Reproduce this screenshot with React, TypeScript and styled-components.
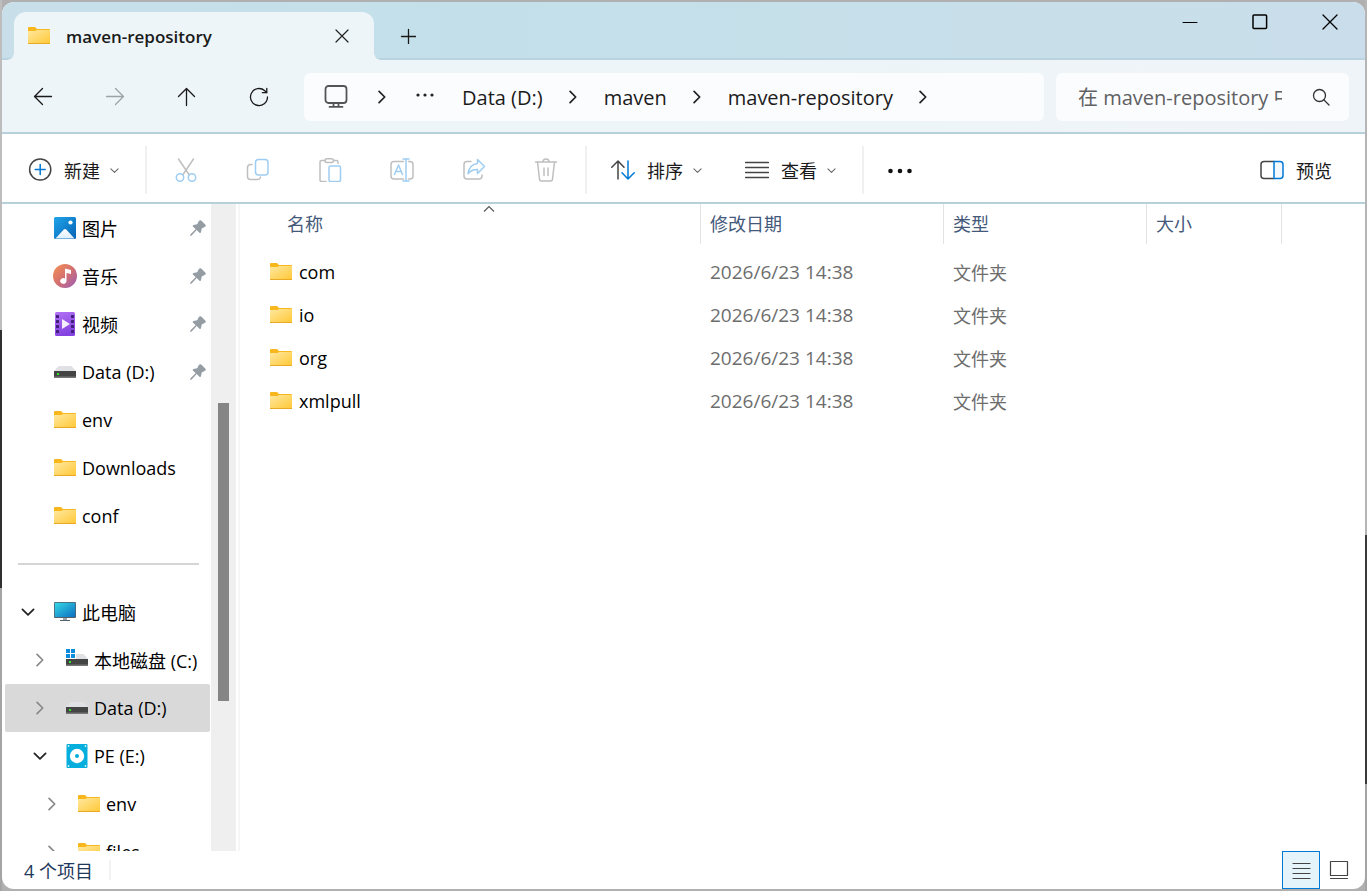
import React from "react";
import styled, { createGlobalStyle, css } from "styled-components";

const GlobalStyle = createGlobalStyle`
  *, *::before, *::after { box-sizing: border-box; }
  body {
    margin: 0;
    overflow: hidden;
    font-family: "Open Sans", "Noto Sans CJK SC", sans-serif;
    font-size: 18px;
    color: #000;
  }
  button, input { font: inherit; color: inherit; }
  button { background: none; border: 0; padding: 0; cursor: default; }
  svg { display: block; flex: none; }
`;

const Desktop = styled.div`
  height: 100vh;
  padding: 2px;
  background:
    linear-gradient(#bdbdbd 0 37%, #303030 37% 66%, #a4a4a4 66%) left / 2px 100% no-repeat,
    linear-gradient(#b5b5b5 0 60%, #3a3a3a 60% 88%, #a4a4a4 88%) right / 2px 100% no-repeat,
    #b0b0b0;
`;

const Window = styled.div`
  height: 100%;
  display: flex;
  flex-direction: column;
  overflow: hidden;
  border-radius: 12px;
  background: #fff;
`;

const TitleBar = styled.header`
  height: 58px;
  flex: none;
  display: flex;
  align-items: flex-end;
  background: linear-gradient(90deg, #c8dfea, #c3e0ea 35%, #c8dfea 75%, #c9deea);
  box-shadow: inset 0 -2px #b9d4e0;
`;

const Tab = styled.div`
  position: relative;
  width: 360px;
  height: 48px;
  margin-left: 12px;
  padding: 0 14px 0 13px;
  display: flex;
  align-items: center;
  border-radius: 12px 12px 0 0;
  background: #edf5f9;
  font-size: 17px;
  font-weight: 600;
  color: #1a1a1a;

  &::before, &::after {
    content: "";
    position: absolute;
    bottom: 0;
    width: 6px;
    height: 6px;
  }
  &::before {
    right: 100%;
    background: radial-gradient(circle at 0 0, transparent 5px, #edf5f9 6px);
  }
  &::after {
    left: 100%;
    background: radial-gradient(circle at 100% 0, transparent 5px, #edf5f9 6px);
  }
`;

const TabTitle = styled.span`
  flex: 1;
  margin-left: 15px;
`;

const TabButton = styled.button`
  width: 36px;
  height: 48px;
  display: grid;
  place-items: center;
`;

const NewTab = styled(TabButton)`
  margin-left: 16px;
`;

const WindowControls = styled.div`
  display: flex;
  align-self: flex-start;
  margin-left: auto;
`;

const ControlButton = styled.button`
  width: 70px;
  height: 40px;
  display: grid;
  place-items: center;
`;

const NavBar = styled.nav`
  height: 74px;
  flex: none;
  display: flex;
  align-items: center;
  padding: 2px 16px 0 5px;
  border-bottom: 2px solid #b7d1dc;
  background: linear-gradient(90deg, #edf5f9 50%, #eff4f8);
`;

const NavButton = styled.button`
  width: 72px;
  height: 48px;
  display: grid;
  place-items: center;
`;

const Field = styled.div`
  height: 48px;
  display: flex;
  align-items: center;
  border-radius: 6px;
  background: #fbfcfe;
  font-size: 20px;
`;

const AddressBar = styled(Field)`
  flex: 1;
  min-width: 0;
  margin: 0 12px 0 9px;
  padding-left: 20px;
  color: #1b1b1b;
`;

const Crumb = styled.a`
  color: inherit;
  text-decoration: none;
  white-space: nowrap;
`;

const CrumbArrow = styled.span`
  width: 61px;
  display: grid;
  place-items: center;
`;

const IconCrumbs = styled.div`
  display: flex;
  align-items: center;
  gap: 27px;
  margin-right: 28px;
`;

const SearchBar = styled(Field)`
  width: 293px;
  padding: 0 18px 0 22px;
`;

const SearchInput = styled.input`
  flex: 1;
  min-width: 0;
  margin-right: 29px;
  padding: 0;
  border: 0;
  outline: 0;
  background: none;
  &::placeholder { color: #5f6163; opacity: 1; }
`;

const Toolbar = styled.div`
  height: 70px;
  flex: none;
  display: flex;
  align-items: center;
  padding: 4px 23px 0 16px;
  border-bottom: 2px solid #b7d1dc;
  background: #fff;
`;

const LabelButton = styled.button`
  height: 48px;
  padding: 0 10px;
  display: flex;
  align-items: center;
  gap: 12px;
  color: #1a1a1a;
  white-space: nowrap;
`;

const ButtonText = styled.span`
  display: flex;
  align-items: center;
  gap: 10px;
`;

const ToolButton = styled.button`
  width: 72px;
  height: 48px;
  display: grid;
  place-items: center;
`;

const Divider = styled.span`
  width: 2px;
  height: 48px;
  background: #f0f0f0;
`;

const Gap = styled.span<{ $w: number }>`
  width: ${(p) => p.$w}px;
`;

const Spacer = styled.span`
  flex: 1;
`;

const Content = styled.main`
  flex: 1;
  min-height: 0;
  display: flex;
`;

const Sidebar = styled.aside`
  width: 209px;
  flex: none;
  overflow: hidden;
`;

const TreeList = styled.ul`
  list-style: none;
  margin: 0;
  padding: 0 1px 0 3px;
`;

const TreeRow = styled.li<{ $level: number; $selected?: boolean }>`
  height: 48px;
  padding-left: ${(p) => p.$level * 12}px;
  padding-right: 4px;
  display: flex;
  align-items: center;
  border-radius: 2px;
  white-space: nowrap;
  ${(p) => p.$selected && css`background: #d9d9d9;`}
`;

const Expander = styled.button`
  width: 24px;
  height: 24px;
  margin: 0 13px 0 11px;
  display: grid;
  place-items: center;
`;

const TreeIcon = styled.span`
  width: 24px;
  height: 24px;
  margin-right: 5px;
  display: grid;
  place-items: center;
`;

const TreeLabel = styled.span`
  flex: 1;
`;

const TreeSeparator = styled.hr`
  height: 2px;
  margin: 23px 12px 23px 16px;
  border: 0;
  background: #d5d5d5;
`;

const ScrollTrack = styled.div`
  width: 25px;
  flex: none;
  padding: 199px 7px 0;
  background: #efefef;
`;

const ScrollThumb = styled.div`
  height: 298px;
  background: #858585;
`;

const Splitter = styled.div`
  width: 2px;
  flex: none;
  margin: 0 0 0 2px;
  background: #f6f6f6;
`;

const FilePane = styled.section`
  flex: 1;
  min-width: 0;
  overflow: hidden;
`;

const FileTable = styled.table`
  width: 1042px;
  table-layout: fixed;
  border-collapse: separate;
  border-spacing: 0;
`;

const HeadCell = styled.th<{ $w: number; $first?: boolean }>`
  position: relative;
  width: ${(p) => p.$w}px;
  height: 40px;
  padding: 0 0 2px ${(p) => (p.$first ? 47 : 9)}px;
  border-right: 1px solid #e3e3e3;
  text-align: left;
  font-weight: 400;
  color: #44597a;
`;

const SortMark = styled.svg`
  position: absolute;
  top: 1px;
  left: 243px;
`;

const FileRow = styled.tr`
  &:first-child td { border-top: 6px solid transparent; height: 49px; }
`;

const FileCell = styled.td`
  height: 43px;
  padding: 0 0 0 9px;
  color: #6d6d6d;
`;

const DateCell = styled(FileCell)`
  font-size: 19px;
`;

const NameCell = styled(FileCell)`
  padding-left: 29px;
  color: #000;
`;

const FileName = styled.span`
  display: flex;
  align-items: center;
  gap: 6px;
`;

const StatusBar = styled.footer`
  height: 38px;
  flex: none;
  display: flex;
  align-items: center;
  padding-left: 22px;
  padding-right: 7px;
  color: #1e395b;
`;

const StatusDivider = styled.span`
  width: 2px;
  height: 20px;
  margin-left: 16px;
  background: #f2f2f2;
`;

const ViewButton = styled.button<{ $active?: boolean }>`
  width: 38px;
  height: 38px;
  display: grid;
  place-items: center;
  ${(p) => p.$active && css`border: 1px solid #0078d4; background: #e5f3fb;`}
`;

/* ---------- icons ---------- */

const FolderIcon = () => (
  <svg width="24" height="24" viewBox="0 0 24 24">
    <defs>
      <linearGradient id="folder" x1="0" y1="0" x2="1" y2="1">
        <stop offset="0" stopColor="#ffe8a0" />
        <stop offset="1" stopColor="#ffc939" />
      </linearGradient>
    </defs>
    <path d="M1 4a1 1 0 0 1 1-1h6l2 2h12a1 1 0 0 1 1 1v3H1z" fill="#f8b81d" />
    <path d="M1 7h7.500l1.500-1H23v13H1z" fill="url(#folder)" />
    <path d="M1 19h22v.500a.500.500 0 0 1-.500.500h-21a.500.500 0 0 1-.500-.500z" fill="#eba923" />
  </svg>
);

const PicturesIcon = () => (
  <svg width="24" height="24" viewBox="0 0 24 24">
    <defs>
      <linearGradient id="pic" x1="0" y1="0" x2="1" y2="1">
        <stop offset="0" stopColor="#1fa4ea" />
        <stop offset="1" stopColor="#0763b4" />
      </linearGradient>
      <linearGradient id="hill" x1="0" y1="0" x2="0" y2="1">
        <stop offset="0" stopColor="#fff" />
        <stop offset="1" stopColor="#dceffc" />
      </linearGradient>
    </defs>
    <rect x="1" y="1" width="22" height="22" rx="1.500" fill="url(#pic)" />
    <path d="M2.500 22.500 10.800 13.600a1.700 1.700 0 0 1 2.400 0L21.500 22.500z" fill="url(#hill)" />
    <circle cx="17.500" cy="6.500" r="2.100" fill="#fff" />
  </svg>
);

const MusicIcon = () => (
  <svg width="24" height="24" viewBox="0 0 24 24">
    <defs>
      <linearGradient id="music" x1="0.100" y1="0.100" x2="0.900" y2="0.900">
        <stop offset="0" stopColor="#f08c58" />
        <stop offset="0.500" stopColor="#d3706f" />
        <stop offset="1" stopColor="#a661ad" />
      </linearGradient>
    </defs>
    <circle cx="12" cy="12" r="12" fill="url(#music)" />
    <path d="M12 4.500 18 6v4l-4.500-1.100V17a3.200 2.900 0 1 1-1.500-2.500z" fill="#fff" />
  </svg>
);

const VideoIcon = () => (
  <svg width="24" height="24" viewBox="0 0 24 24">
    <defs>
      <linearGradient id="video" x1="0" y1="0" x2="0.300" y2="1">
        <stop offset="0" stopColor="#b272f5" />
        <stop offset="1" stopColor="#8442e0" />
      </linearGradient>
    </defs>
    <rect x="2" width="20" height="24" rx="1.500" fill="url(#video)" />
    {[3, 8, 13, 18].map((y) => (
      <g key={y} fill="#40207a">
        <rect x="3" y={y} width="3" height="3" rx="0.500" />
        <rect x="18" y={y} width="3" height="3" rx="0.500" />
      </g>
    ))}
    <path d="M9 7v10l8-5z" fill="#f3edfc" />
  </svg>
);

const DriveShape = () => (
  <>
    <path d="M5.500 6h13L23 11H1z" fill="#dfe1e5" />
    <path d="M1 11h22v7H1z" fill="#444" />
    <path d="M1 16.500h22V18H1z" fill="#777" />
    <rect x="4" y="13" width="2" height="2" fill="#2de82d" />
  </>
);

const DriveIcon = () => (
  <svg width="24" height="24" viewBox="0 0 24 24">
    <DriveShape />
  </svg>
);

const SystemDriveIcon = () => (
  <svg width="24" height="24" viewBox="0 0 24 24">
    <DriveShape />
    <path d="M1 1h10v10H1z" fill="#fff" />
    <path d="M1 1h4v4H1zM6 1h4v4H6zM1 6h4v4H1zM6 6h4v4H6z" fill="#0d8bdd" />
  </svg>
);

const ComputerIcon = () => (
  <svg width="24" height="24" viewBox="0 0 24 24">
    <defs>
      <linearGradient id="screen" x1="0" y1="0" x2="1" y2="1">
        <stop offset="0" stopColor="#36d8e6" />
        <stop offset="1" stopColor="#0b6ec0" />
      </linearGradient>
    </defs>
    <rect x="1" y="2" width="22" height="16" rx="1" fill="#54616d" />
    <rect x="1.800" y="2.800" width="20.400" height="14.200" fill="url(#screen)" />
    <path d="M10 18h4v2h-4z" fill="#9aa5af" />
    <path d="M7 20h10v1H7z" fill="#54616d" />
  </svg>
);

const DiskIcon = () => (
  <svg width="24" height="24" viewBox="0 0 24 24">
    <rect x="1.500" width="21" height="24" rx="1" fill="#06aede" />
    <circle cx="12" cy="12" r="7.200" fill="#fff" />
    <circle cx="12" cy="12" r="2" fill="#06aede" />
    {[[3.500, 2], [20.500, 2], [3.500, 22], [20.500, 22]].map(([x, y]) => (
      <circle key={`${x}-${y}`} cx={x} cy={y} r="0.900" fill="#d6f3fb" />
    ))}
  </svg>
);

const PinIcon = () => (
  <svg width="16" height="16" viewBox="0 0 16 16" fill="#949ca4">
    <path d="M9 .700Q10.500-.300 11.700.900L15.200 4.400Q16.300 5.700 15 6.800L11.700 8.600 11 12.300Q10.500 13.500 9.500 12.800L6.700 10.100 1.700 15.400 0 16 .500 14.200 5.700 9.200 2.900 6.500Q2.200 5.400 3.500 4.900L7.200 4.200z" />
  </svg>
);

const Chevron = ({ dir, size = 12, color = "#222", stroke = 1.500 }: {
  dir: "right" | "down";
  size?: number;
  color?: string;
  stroke?: number;
}) => (
  <svg width={size} height={size} viewBox="0 0 12 12" fill="none" stroke={color} strokeWidth={stroke} strokeLinecap="round" strokeLinejoin="round">
    <path d={dir === "right" ? "M3.500 1.200 8.300 6l-4.800 4.800" : "M1.200 3.700 6 8.500l4.800-4.800"} />
  </svg>
);

const Stroke = ({ w = 24, color = "#1a1a1a", width = 1.300, children }: {
  w?: number;
  color?: string;
  width?: number;
  children: React.ReactNode;
}) => (
  <svg width={w} height={w} viewBox={`0 0 ${w} ${w}`} fill="none" stroke={color} strokeWidth={width} strokeLinecap="round" strokeLinejoin="round">
    {children}
  </svg>
);

const GRAY = "#bfbfbf";
const PALE = "#9fcdf2";
const BLUE = "#0078d4";

/* ---------- data ---------- */

type Node = {
  label: string;
  icon: React.ReactNode;
  level: number;
  pinned?: boolean;
  selected?: boolean;
  open?: boolean;
};

const quickAccess: Node[] = [
  { label: "图片", icon: <PicturesIcon />, level: 0, pinned: true },
  { label: "音乐", icon: <MusicIcon />, level: 0, pinned: true },
  { label: "视频", icon: <VideoIcon />, level: 0, pinned: true },
  { label: "Data (D:)", icon: <DriveIcon />, level: 0, pinned: true },
  { label: "env", icon: <FolderIcon />, level: 0 },
  { label: "Downloads", icon: <FolderIcon />, level: 0 },
  { label: "conf", icon: <FolderIcon />, level: 0 },
];

const computer: Node[] = [
  { label: "此电脑", icon: <ComputerIcon />, level: 0, open: true },
  { label: "本地磁盘 (C:)", icon: <SystemDriveIcon />, level: 1, open: false },
  { label: "Data (D:)", icon: <DriveIcon />, level: 1, open: false, selected: true },
  { label: "PE (E:)", icon: <DiskIcon />, level: 1, open: true },
  { label: "env", icon: <FolderIcon />, level: 2, open: false },
  { label: "files", icon: <FolderIcon />, level: 2, open: false },
];

const files = ["com", "io", "org", "xmlpull"];

const TreeItem = ({ node }: { node: Node }) => (
  <TreeRow $level={node.level} $selected={node.selected}>
    {node.open === undefined ? (
      <Expander as="span" />
    ) : (
      <Expander aria-label={node.open ? "折叠" : "展开"}>
        <Chevron dir={node.open ? "down" : "right"} size={14} color={node.open ? "#222" : "#8a8a8a"} />
      </Expander>
    )}
    <TreeIcon>{node.icon}</TreeIcon>
    <TreeLabel>{node.label}</TreeLabel>
    {node.pinned && <PinIcon />}
  </TreeRow>
);

const Dropdown = ({ label, icon }: { label: string; icon: React.ReactNode }) => (
  <LabelButton>
    {icon}
    <ButtonText>
      {label}
      <Chevron dir="down" size={9} color="#666" stroke={1.400} />
    </ButtonText>
  </LabelButton>
);

export default function App() {
  return (
    <>
      <GlobalStyle />
      <Desktop>
        <Window>
          <TitleBar>
            <Tab>
              <FolderIcon />
              <TabTitle>maven-repository</TabTitle>
              <TabButton aria-label="关闭标签页">
                <Stroke w={14} color="#222" width={1.200}><path d="M1 1l12 12M13 1 1 13" /></Stroke>
              </TabButton>
            </Tab>
            <NewTab aria-label="新建标签页">
              <Stroke w={16}><path d="M8.500 1.500v14M1.500 8.500h14" /></Stroke>
            </NewTab>
            <WindowControls>
              <ControlButton aria-label="最小化">
                <Stroke w={16} color="#000" width={1}><path d="M1 8.500h14" /></Stroke>
              </ControlButton>
              <ControlButton aria-label="最大化">
                <Stroke w={16} color="#000" width={1.500}><rect x="1" y="1" width="13.600" height="13.600" rx="1" /></Stroke>
              </ControlButton>
              <ControlButton aria-label="关闭">
                <Stroke w={16} color="#000"><path d="M1 1l14 14M15 1 1 15" /></Stroke>
              </ControlButton>
            </WindowControls>
          </TitleBar>

          <NavBar>
            <NavButton aria-label="后退">
              <Stroke w={20}><path d="M18.500 9.500H1.500M9.500 1.500 1.500 9.500l8 8" /></Stroke>
            </NavButton>
            <NavButton aria-label="前进">
              <Stroke w={20} color="#9da2a6"><path d="M1.500 9.500h17M10.500 1.500 18.500 9.500l-8 8" /></Stroke>
            </NavButton>
            <NavButton aria-label="向上">
              <Stroke w={20}><path d="M9.500 18.500V1.500M1.500 9.500 9.500 1.500l8 8" /></Stroke>
            </NavButton>
            <NavButton aria-label="刷新">
              <Stroke w={20}><path d="M18.500 10A8.500 8.500 0 1 1 15.800 3.800L17.800 5.700M17.800 1.300v4.400h-4.400" /></Stroke>
            </NavButton>
            <AddressBar>
              <IconCrumbs>
                <Stroke w={24} color="#555" width={1.800}>
                  <rect x="1.500" y="1" width="21" height="17" rx="3" />
                  <path d="M9.500 18v3.500M14.500 18v3.500M5.500 21.800h13" />
                </Stroke>
                <Chevron dir="right" size={14} />
                <svg width="18" height="18" viewBox="0 0 18 18" fill="#222">
                  <circle cx="2" cy="7" r="1.600" /><circle cx="9" cy="7" r="1.600" /><circle cx="16" cy="7" r="1.600" />
                </svg>
              </IconCrumbs>
              <Crumb href="#">Data (D:)</Crumb>
              <CrumbArrow><Chevron dir="right" size={14} /></CrumbArrow>
              <Crumb href="#">maven</Crumb>
              <CrumbArrow><Chevron dir="right" size={14} /></CrumbArrow>
              <Crumb href="#">maven-repository</Crumb>
              <CrumbArrow><Chevron dir="right" size={14} /></CrumbArrow>
            </AddressBar>
            <SearchBar>
              <SearchInput aria-label="搜索" placeholder="在 maven-repository 中搜索" />
              <Stroke w={20} color="#333"><circle cx="8.500" cy="8.500" r="6" /><path d="M13 13l5 5" /></Stroke>
            </SearchBar>
          </NavBar>

          <Toolbar>
            <Dropdown
              label="新建"
              icon={
                <Stroke w={24} color="#444" width={1.500}>
                  <circle cx="12.200" cy="11.500" r="10.600" />
                  <path d="M12.200 6.500v10M7.200 11.500h10" stroke={BLUE} />
                </Stroke>
              }
            />
            <Gap $w={16} />
            <Divider />
            <Gap $w={3} />
            <ToolButton aria-label="剪切">
              <Stroke color={GRAY} width={1.500}>
                <path d="M4.500 1 15.300 17M19.500 1 8.700 17" />
                <circle cx="6" cy="19.500" r="3.700" stroke={PALE} /><circle cx="18" cy="19.500" r="3.700" stroke={PALE} />
              </Stroke>
            </ToolButton>
            <ToolButton aria-label="复制">
              <Stroke color={GRAY} width={1.500}>
                <path d="M6 6.500H4.500a3 3 0 0 0-3 3v9a3 3 0 0 0 3 3h7a3 3 0 0 0 3-2.500" />
                <rect x="9.500" y="1.500" width="12.500" height="15.500" rx="3" stroke={PALE} />
              </Stroke>
            </ToolButton>
            <ToolButton aria-label="粘贴">
              <Stroke color={GRAY} width={1.500}>
                <path d="M7 2.500H3.500a1.500 1.500 0 0 0-1.500 1.500v18a1.500 1.500 0 0 0 1.500 1.500H8M16 2.500h2.500A1.500 1.500 0 0 1 20 4v1.500" />
                <rect x="7" y=".800" width="8.500" height="3.600" rx="1.800" />
                <rect x="11" y="8" width="11.500" height="15.500" rx="1.500" stroke={PALE} />
              </Stroke>
            </ToolButton>
            <ToolButton aria-label="重命名">
              <Stroke color={GRAY} width={1.500}>
                <path d="M13.500 3.500H4a3 3 0 0 0-3 3V18a3 3 0 0 0 3 3h9.500M18.500 3.500H20a3 3 0 0 1 3 3V18a3 3 0 0 1-3 3h-1.500" />
                <path d="M16 1v22M13 1h6M13 23h6M4.500 16.500 8.500 7l4 9.500M6 13.500h5" stroke={PALE} />
              </Stroke>
            </ToolButton>
            <ToolButton aria-label="共享">
              <Stroke color={GRAY} width={1.500}>
                <path d="M9 3.500H5a3 3 0 0 0-3 3V18a3 3 0 0 0 3 3h12a3 3 0 0 0 3-3v-1" />
                <path d="M15.500 1.500 22.500 8.500 15.500 15.500v-4c-4 0-7 1-9.500 4.200.500-5.500 4-9.900 9.500-10.200z" stroke={PALE} />
              </Stroke>
            </ToolButton>
            <ToolButton aria-label="删除">
              <Stroke color={GRAY} width={1.500}>
                <path d="M1.500 4h21M3.500 4l2 17a2 2 0 0 0 2 2h9a2 2 0 0 0 2-2l2-17M9 4a3 3 0 0 1 6 0M10 10v7.500M14 10v7.500" />
              </Stroke>
            </ToolButton>
            <Gap $w={3} />
            <Divider />
            <Gap $w={14} />
            <Dropdown
              label="排序"
              icon={
                <Stroke color="#444" width={1.500}>
                  <path d="M7 21V3M.800 9.200 7 3l6 6.200" />
                  <path d="M17 3v18M11 14.800 17 21l6.200-6.200" stroke={BLUE} />
                </Stroke>
              }
            />
            <Gap $w={23} />
            <Dropdown
              label="查看"
              icon={<Stroke color="#444" width={1.400}><path d="M.500 4.500h23M.500 9.500h23M.500 14.500h23M.500 19.500h23" /></Stroke>}
            />
            <Gap $w={16} />
            <Divider />
            <ToolButton aria-label="更多">
              <svg width="26" height="24" viewBox="0 0 26 24" fill="#111">
                <circle cx="3.500" cy="13" r="2.300" /><circle cx="13" cy="13" r="2.300" /><circle cx="22.500" cy="13" r="2.300" />
              </svg>
            </ToolButton>
            <Spacer />
            <LabelButton>
              <Stroke color="#444" width={1.500}>
                <path d="M14 3.500H4a3 3 0 0 0-3 3v11a3 3 0 0 0 3 3h10" />
                <path d="M14 3.500h6a3 3 0 0 1 3 3v11a3 3 0 0 1-3 3h-6z" stroke={BLUE} fill="#f2f8fd" />
              </Stroke>
              预览
            </LabelButton>
          </Toolbar>

          <Content>
            <Sidebar>
              <TreeList>
                {quickAccess.map((n) => <TreeItem key={n.label} node={n} />)}
              </TreeList>
              <TreeSeparator />
              <TreeList>
                {computer.map((n) => <TreeItem key={n.label} node={n} />)}
              </TreeList>
            </Sidebar>
            <ScrollTrack><ScrollThumb /></ScrollTrack>
            <Splitter />
            <FilePane>
              <FileTable>
                <thead>
                  <tr>
                    <HeadCell $w={461} $first>
                      名称
                      <SortMark width="12" height="8" viewBox="0 0 12 8" fill="none" stroke="#555" strokeWidth="1.100">
                        <path d="M1 6.500 6 1.500l5 5" />
                      </SortMark>
                    </HeadCell>
                    <HeadCell $w={243}>修改日期</HeadCell>
                    <HeadCell $w={203}>类型</HeadCell>
                    <HeadCell $w={135}>大小</HeadCell>
                  </tr>
                </thead>
                <tbody>
                  {files.map((name) => (
                    <FileRow key={name}>
                      <NameCell><FileName><FolderIcon />{name}</FileName></NameCell>
                      <DateCell>2026/6/23 14:38</DateCell>
                      <FileCell>文件夹</FileCell>
                      <FileCell />
                    </FileRow>
                  ))}
                </tbody>
              </FileTable>
            </FilePane>
          </Content>

          <StatusBar>
            4 个项目
            <StatusDivider />
            <Spacer />
            <ViewButton $active aria-label="详细信息">
              <Stroke w={20} color="#444" width={1.200}><path d="M2 3.500h17M2 8.500h17M2 13.500h17M2 18.500h17" /></Stroke>
            </ViewButton>
            <ViewButton aria-label="缩略图">
              <Stroke w={20} color="#444" width={1.200}><path d="M1.500 1.500h17v14h-17zM1.500 18.500h17" /></Stroke>
            </ViewButton>
          </StatusBar>
        </Window>
      </Desktop>
    </>
  );
}
